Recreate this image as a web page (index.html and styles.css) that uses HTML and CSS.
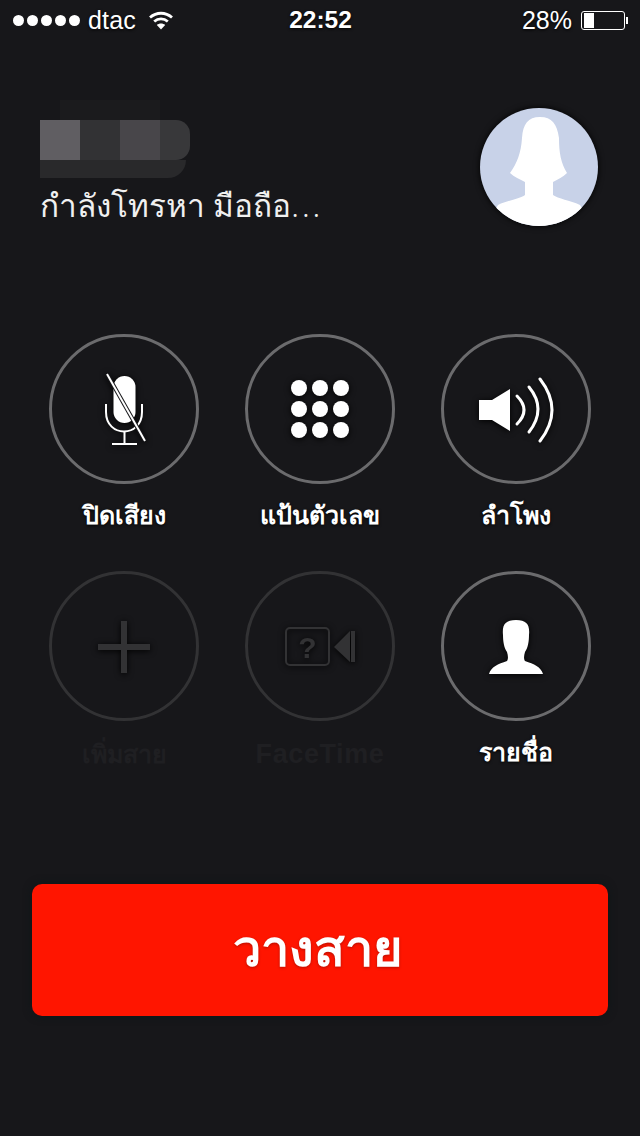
FILE: index.html
```html
<!DOCTYPE html>
<html lang="th">
<head>
    <meta charset="UTF-8">
    <meta name="viewport" content="width=device-width, initial-scale=1.0">
    <title>กำลังโทรหา</title>
    <link rel="stylesheet" href="styles.css">
</head>
<body>
    <div class="status-bar">
        <div class="status-left">
            <div class="signal">
                <span class="dot"></span><span class="dot"></span><span class="dot"></span><span class="dot"></span><span class="dot"></span>
            </div>
            <span class="carrier">dtac</span>
            <svg class="wifi" viewBox="0 0 26 20" width="26" height="20">
                <path d="M2 7.500 C8.500 1.800 17.500 1.800 24 7.500" fill="none" stroke="#fff" stroke-width="2.800"/>
                <path d="M6.200 11.500 C10.200 8 15.800 8 19.800 11.500" fill="none" stroke="#fff" stroke-width="2.800"/>
                <path d="M13 19.500 L8.800 15 C11.200 13 14.800 13 17.200 15 Z" fill="#fff"/>
            </svg>
        </div>
        <div class="clock">22:52</div>
        <div class="status-right">
            <span class="percent">28%</span>
            <div class="battery"><div class="battery-level"></div></div>
            <div class="battery-tip"></div>
        </div>
    </div>

    <div class="caller">
        <div class="caller-info">
            <div class="blurred-name">
                <div class="blur-top"></div>
                <div class="blur-cells">
                    <div class="cell cell-a"></div>
                    <div class="cell cell-b"></div>
                    <div class="cell cell-c"></div>
                    <div class="cell cell-d"></div>
                </div>
                <div class="blur-bottom"></div>
            </div>
            <div class="call-state">กำลังโทรหา มือถือ<span class="ellipsis">...</span></div>
        </div>
        <svg class="avatar" viewBox="0 0 118 118" width="118" height="118">
            <path fill="#fff" d="M5 118 L18 97 C28 92 40 91 45 87 L45 74 C40 71 34 69 30 65 C37 55 41 45 42 30 C43 16 48 9 60 9 C72 9 77 16 79 30 C79 45 81 55 87 65 C83 69 78 71 73 74 L73 87 C78 91 90 92 100 97 L113 118 Z"/>
        </svg>
    </div>

    <div class="controls">
        <div class="control">
            <div class="ring">
                <svg viewBox="0 0 144 144" width="144" height="144">
                    <g transform="translate(-3 -3)">
                        <rect x="64.500" y="42" width="22" height="47" rx="11" fill="#fff"/>
                        <path d="M57 70 L57 78 C57 104 93 104 93 78 L93 70" fill="none" stroke="#fff" stroke-width="2"/>
                        <path d="M75.500 97 L75.500 110 M63 110 L88 110" fill="none" stroke="#fff" stroke-width="2"/>
                        <path d="M58 40 L96 107" stroke="#17171a" stroke-width="4"/>
                        <path d="M58 40 L96 107" stroke="#fff" stroke-width="2"/>
                    </g>
                </svg>
            </div>
            <div class="label">ปิดเสียง</div>
        </div>
        <div class="control">
            <div class="ring">
                <svg viewBox="0 0 144 144" width="144" height="144">
                    <g transform="translate(-3 -3)" fill="#fff">
                        <circle cx="54" cy="54" r="8"/><circle cx="75" cy="54" r="8"/><circle cx="96" cy="54" r="8"/>
                        <circle cx="54" cy="75" r="8"/><circle cx="75" cy="75" r="8"/><circle cx="96" cy="75" r="8"/>
                        <circle cx="54" cy="96" r="8"/><circle cx="75" cy="96" r="8"/><circle cx="96" cy="96" r="8"/>
                    </g>
                </svg>
            </div>
            <div class="label">แป้นตัวเลข</div>
        </div>
        <div class="control">
            <div class="ring">
                <svg viewBox="0 0 144 144" width="144" height="144">
                    <g transform="translate(-3 -3)">
                        <path d="M38 66 L51 66 L69 55 L69 97 L51 86 L38 86 Z" fill="#fff"/>
                        <g fill="none" stroke="#fff" stroke-width="3" stroke-linecap="round">
                            <path d="M76 62 Q90 76 76 90"/>
                            <path d="M88 53 Q106 75 88 98"/>
                            <path d="M99 45 Q123 76 99 107"/>
                        </g>
                    </g>
                </svg>
            </div>
            <div class="label">ลำโพง</div>
        </div>
        <div class="control disabled">
            <div class="ring">
                <svg viewBox="0 0 144 144" width="144" height="144">
                    <g transform="translate(-3 -3)" fill="#323234">
                        <rect x="49" y="73" width="52" height="6"/>
                        <rect x="72" y="50" width="6" height="52"/>
                    </g>
                </svg>
            </div>
            <div class="label">เพิ่มสาย</div>
        </div>
        <div class="control disabled">
            <div class="ring">
                <svg viewBox="0 0 144 144" width="144" height="144">
                    <g transform="translate(-3 -3)">
                        <rect x="41" y="57" width="43" height="37" rx="4" fill="none" stroke="#323234" stroke-width="2"/>
                        <text x="62.500" y="87" class="question">?</text>
                        <path d="M89 76 L105 60 L105 91 Z" fill="#323234"/>
                        <rect x="106" y="60" width="4" height="31" fill="#323234"/>
                    </g>
                </svg>
            </div>
            <div class="label label-latin">FaceTime</div>
        </div>
        <div class="control">
            <div class="ring">
                <svg viewBox="0 0 144 144" width="144" height="144">
                    <g transform="translate(-3 -3)">
                        <path fill="#fff" d="M48 103 C50 96 57 93 66 90 C67.500 88 67 84 66 81 C63 77 62 70 62 64 C61 54 64 49 75 49 C86 49 89 54 88 64 C88 70 87 77 84 81 C83 84 82.500 88 84 90 C93 93 100 96 102 103 Z"/>
                    </g>
                </svg>
            </div>
            <div class="label">รายชื่อ</div>
        </div>
    </div>

    <div class="end-call">วางสาย</div>
</body>
</html>
```

FILE: styles.css
```css
* {
    box-sizing: border-box;
}

body {
    margin: 0;
    width: 640px;
    height: 1136px;
    overflow: hidden;
    background-color: #17171a;
    color: #fff;
    font-family: "Liberation Sans", "Noto Sans", sans-serif;
}

.status-bar {
    display: grid;
    grid-template-columns: 1fr auto 1fr;
    align-items: center;
    height: 40px;
    padding: 0 12px 0 13px;
    font-size: 25px;
    text-shadow: 0 1px 3px #000;
}

.status-left {
    display: flex;
    align-items: center;
}

.signal {
    display: flex;
    gap: 3px;
}

.dot {
    width: 11px;
    height: 11px;
    border-radius: 50%;
    background-color: #fff;
}

.carrier {
    margin-left: 8px;
    letter-spacing: 0.200px;
}

.wifi {
    margin-left: 12px;
}

.clock {
    font-size: 24.500px;
    font-weight: bold;
}

.status-right {
    display: flex;
    align-items: center;
    justify-content: flex-end;
}

.percent {
    margin-right: 9px;
}

.battery {
    width: 44px;
    height: 19px;
    padding: 1px 2px;
    border: 1px solid #fff;
    border-radius: 3px;
}

.battery-level {
    width: 10px;
    height: 100%;
    background-color: #fff;
}

.battery-tip {
    width: 2px;
    height: 7px;
    margin-left: 1px;
    background-color: #fff;
}

.caller {
    display: flex;
    justify-content: space-between;
    padding: 60px 42px 0 40px;
    height: 294px;
}

.blurred-name {
    width: 150px;
    height: 78px;
}

.blur-top {
    height: 20px;
    width: 100px;
    margin-left: 20px;
    background-color: #1b1b1d;
}

.blur-cells {
    display: flex;
    height: 40px;
}

.cell {
    width: 40px;
}

.cell-a {
    background-color: #605e62;
}

.cell-b {
    background-color: #323234;
}

.cell-c {
    background-color: #48464a;
}

.cell-d {
    width: 30px;
    background-color: #38383a;
    border-radius: 0 14px 14px 0;
}

.blur-bottom {
    height: 18px;
    width: 146px;
    background-color: #29292b;
    border-radius: 0 0 24px 0;
}

.call-state {
    margin-top: 3px;
    color: #f0f0f0;
    font-family: "Noto Sans", "Liberation Sans", sans-serif;
    font-size: 31.500px;
    font-weight: 300;
    line-height: 48px;
    white-space: nowrap;
}

.ellipsis {
    letter-spacing: 3px;
}

.avatar {
    margin-top: 8px;
    border-radius: 50%;
    background-color: #c8d2e8;
    box-shadow: 0 0 6px #000;
}

.controls {
    display: grid;
    grid-template-columns: repeat(3, 150px);
    grid-auto-rows: 237px;
    column-gap: 46px;
    padding-left: 49px;
}

.control {
    display: flex;
    flex-direction: column;
    align-items: center;
}

.ring {
    display: flex;
    width: 150px;
    height: 150px;
    border: 3px solid #6b6b6d;
    border-radius: 50%;
}

.ring svg {
    filter: drop-shadow(0 1px 3px #000);
}

.label {
    margin-top: 12px;
    font-family: "Noto Sans", "Liberation Sans", sans-serif;
    font-size: 25px;
    font-weight: 600;
    line-height: 36px;
    white-space: nowrap;
    text-shadow: 0 1px 3px #000;
}

.disabled .ring {
    border-color: #323234;
}

.disabled .label {
    margin-top: 14px;
    color: #1f1f22;
    text-shadow: none;
}

.disabled .label-latin {
    margin-top: 15px;
    font-family: "Liberation Sans", sans-serif;
    font-size: 27px;
    font-weight: bold;
    letter-spacing: 0.600px;
}

.question {
    fill: #323234;
    font-family: "Liberation Sans", sans-serif;
    font-size: 30px;
    font-weight: bold;
    text-anchor: middle;
}

.end-call {
    display: flex;
    align-items: center;
    justify-content: center;
    width: 576px;
    height: 132px;
    margin: 76px 0 0 32px;
    padding: 0 4px 4px 0;
    border-radius: 10px;
    background-color: #ff1500;
    font-family: "Noto Sans", "Liberation Sans", sans-serif;
    font-size: 50.500px;
    font-weight: 600;
    text-shadow: 0 1px 3px rgba(0, 0, 0, 0.3);
    box-shadow: 0 0 8px #0e1618;
}
```
